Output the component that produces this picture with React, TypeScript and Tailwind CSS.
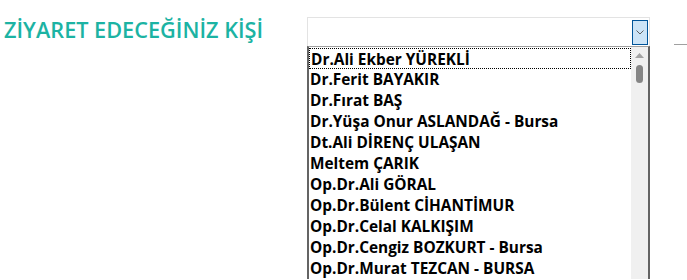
const PEOPLE = [
  "Dr.Ali Ekber YÜREKLİ",
  "Dr.Ferit BAYAKIR",
  "Dr.Fırat BAŞ",
  "Dr.Yüşa Onur ASLANDAĞ - Bursa",
  "Dt.Ali DİRENÇ ULAŞAN",
  "Meltem ÇARIK",
  "Op.Dr.Ali GÖRAL",
  "Op.Dr.Bülent CİHANTİMUR",
  "Op.Dr.Celal KALKIŞIM",
  "Op.Dr.Cengiz BOZKURT - Bursa",
  "Op.Dr.Murat TEZCAN - BURSA",
];

export default function App() {
  return (
    <div className="h-[280px] w-[687px] overflow-hidden bg-white font-['Open_Sans',sans-serif]">
      <div className="flex items-start">
        <h2 className="w-[303px] pl-[4px] pt-[16px] text-[21.7px] font-semibold leading-[28px] text-[#1cb3a3]">
          ZİYARET EDECEĞİNİZ KİŞİ
        </h2>

        <div className="mt-[17px] ml-[4px] w-[343px]">
          <div className="flex h-[29px] items-center justify-end border border-b-0 border-[#e3e3e3] pr-[1px]">
            <button className="flex h-[25px] w-[16px] items-center justify-center border border-[#005499] bg-[#cce4f7]">
              <svg width="8" height="5" viewBox="0 0 8 5" fill="none">
                <path d="M0.5 0.5 L4 4 L7.5 0.5" stroke="#606060" strokeWidth="1" />
              </svg>
            </button>
          </div>

          <div className="flex border-x-2 border-t border-[#646464] border-t-[#a0a0a0]">
            <ul className="flex-1 pt-[1px]">
              {PEOPLE.map((name, i) => (
                <li
                  key={name}
                  className={`h-[21px] overflow-visible pl-[1px] text-[15.4px] font-bold leading-[21px] text-black ${
                    i === 0 ? "border border-dotted border-black pl-0 leading-[19px]" : ""
                  }`}
                >
                  {name}
                </li>
              ))}
            </ul>
            <div className="flex w-[17px] flex-col items-center bg-[#f0f0f0] pt-[6px]">
              <svg width="9" height="5" viewBox="0 0 9 5">
                <path d="M4.5 0 L9 5 L0 5 Z" fill="#a3a3a3" />
              </svg>
              <div className="mt-[7px] h-[18px] w-[7px] rounded-full bg-[#858585]" />
            </div>
          </div>
        </div>

        <div className="mt-[44px] ml-[24px] h-px w-[13px] bg-[#a0a0a0]" />
      </div>
    </div>
  );
}
